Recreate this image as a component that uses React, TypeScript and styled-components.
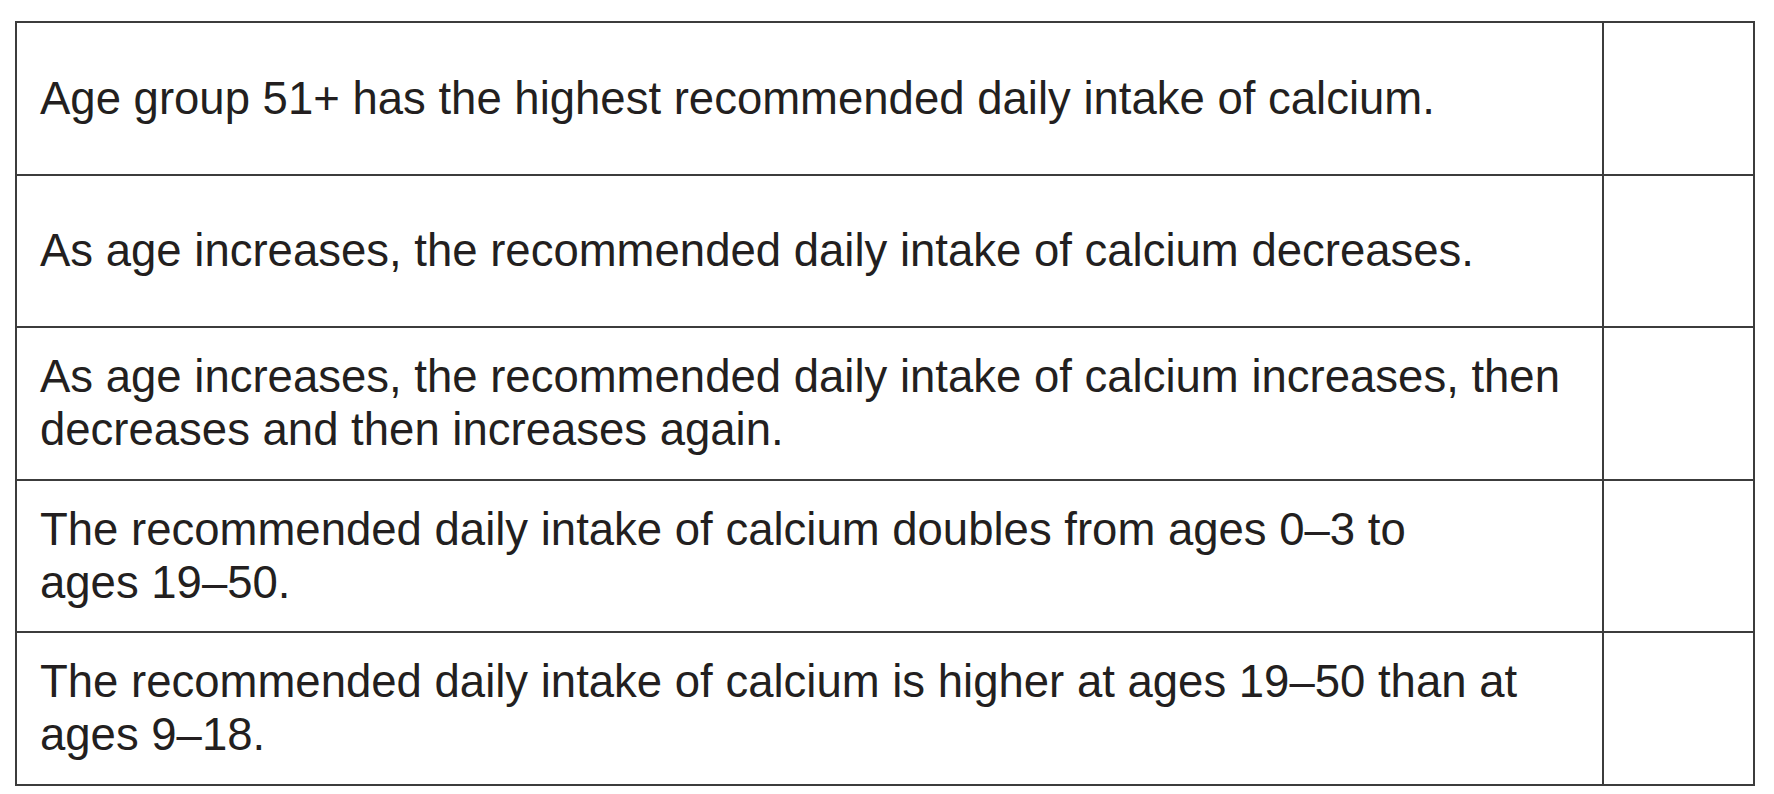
import React, { FC } from 'react';
import styled, { createGlobalStyle } from 'styled-components';

const GlobalStyle = createGlobalStyle`
  body {
    margin: 0;
    background: #ffffff;
    font-family: 'Liberation Sans', Arial, sans-serif;
  }
`;

const Page = styled.div`
  padding: 21px 0 0 15px;
`;

const Table = styled.table`
  border-collapse: collapse;
  width: 1740px;
  table-layout: fixed;
`;

const Row = styled.tr`
  height: 152.5px;
`;

const StatementCell = styled.td`
  box-sizing: border-box;
  width: 1587px;
  border: 2px solid #3c3c3c;
  padding: 0 0 0 23px;
  font-size: 45.5px;
  line-height: 53px;
  color: #231f20;
  vertical-align: middle;
`;

const TickCell = styled.td`
  border: 2px solid #3c3c3c;
`;

const statements: string[][] = [
  ['Age group 51+ has the highest recommended daily intake of calcium.'],
  ['As age increases, the recommended daily intake of calcium decreases.'],
  [
    'As age increases, the recommended daily intake of calcium increases, then',
    'decreases and then increases again.',
  ],
  ['The recommended daily intake of calcium doubles from ages 0–3 to', 'ages 19–50.'],
  [
    'The recommended daily intake of calcium is higher at ages 19–50 than at',
    'ages 9–18.',
  ],
];

const App: FC = () => (
  <Page>
    <GlobalStyle />
    <Table>
      <tbody>
        {statements.map((lines, i) => (
          <Row key={i}>
            <StatementCell>
              {lines.map((line, j) => (
                <React.Fragment key={j}>
                  {j > 0 && <br />}
                  {line}
                </React.Fragment>
              ))}
            </StatementCell>
            <TickCell />
          </Row>
        ))}
      </tbody>
    </Table>
  </Page>
);

export default App;
